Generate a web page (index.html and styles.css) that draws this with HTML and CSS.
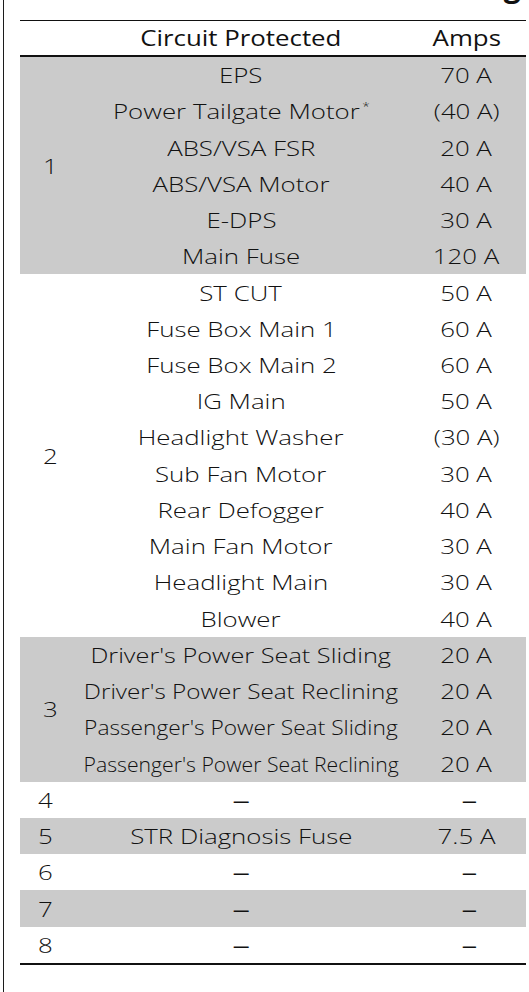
FILE: index.html
```html
<!DOCTYPE html>
<html>
<head>
<meta charset="utf-8">
<link rel="stylesheet" href="styles.css">
</head>
<body>
<div class="page">
  <div class="title-clip"><h2 class="title">Circuit Protected and Fuse Rating</h2></div>
  <table class="fuses">
    <colgroup><col class="c-num"><col class="c-circ"><col class="c-amp"></colgroup>
    <thead>
      <tr><th></th><th><span class="w">Circuit Protected</span></th><th class="amp"><span class="w">Amps</span></th></tr>
    </thead>
    <tbody class="shade">
      <tr><td class="num grp" rowspan="6"><span class="w">1</span></td><td><span class="w">EPS</span></td><td class="amp"><span class="w">70 A</span></td></tr>
      <tr><td><span class="w">Power Tailgate Motor<sup>*</sup></span></td><td class="amp"><span class="w">(40 A)</span></td></tr>
      <tr><td><span class="w">ABS/VSA FSR</span></td><td class="amp"><span class="w">20 A</span></td></tr>
      <tr><td><span class="w">ABS/VSA Motor</span></td><td class="amp"><span class="w">40 A</span></td></tr>
      <tr><td><span class="w">E-DPS</span></td><td class="amp"><span class="w">30 A</span></td></tr>
      <tr><td><span class="w">Main Fuse</span></td><td class="amp"><span class="w">120 A</span></td></tr>
    </tbody>
    <tbody>
      <tr><td class="num grp" rowspan="10"><span class="w">2</span></td><td><span class="w">ST CUT</span></td><td class="amp"><span class="w">50 A</span></td></tr>
      <tr><td><span class="w">Fuse Box Main 1</span></td><td class="amp"><span class="w">60 A</span></td></tr>
      <tr><td><span class="w">Fuse Box Main 2</span></td><td class="amp"><span class="w">60 A</span></td></tr>
      <tr><td><span class="w">IG Main</span></td><td class="amp"><span class="w">50 A</span></td></tr>
      <tr><td><span class="w">Headlight Washer</span></td><td class="amp"><span class="w">(30 A)</span></td></tr>
      <tr><td><span class="w">Sub Fan Motor</span></td><td class="amp"><span class="w">30 A</span></td></tr>
      <tr><td><span class="w">Rear Defogger</span></td><td class="amp"><span class="w">40 A</span></td></tr>
      <tr><td><span class="w">Main Fan Motor</span></td><td class="amp"><span class="w">30 A</span></td></tr>
      <tr><td><span class="w">Headlight Main</span></td><td class="amp"><span class="w">30 A</span></td></tr>
      <tr><td><span class="w">Blower</span></td><td class="amp"><span class="w">40 A</span></td></tr>
    </tbody>
    <tbody class="shade">
      <tr><td class="num grp" rowspan="4"><span class="w">3</span></td><td><span class="w s0">Driver's Power Seat Sliding</span></td><td class="amp"><span class="w">20 A</span></td></tr>
      <tr><td><span class="w s1">Driver's Power Seat Reclining</span></td><td class="amp"><span class="w">20 A</span></td></tr>
      <tr><td><span class="w s2">Passenger's Power Seat Sliding</span></td><td class="amp"><span class="w">20 A</span></td></tr>
      <tr><td><span class="w s3">Passenger's Power Seat Reclining</span></td><td class="amp"><span class="w">20 A</span></td></tr>
    </tbody>
    <tbody>
      <tr><td class="num"><span class="w">4</span></td><td><span class="w dash">–</span></td><td class="amp"><span class="w dash">–</span></td></tr>
    </tbody>
    <tbody class="shade">
      <tr><td class="num"><span class="w">5</span></td><td><span class="w">STR Diagnosis Fuse</span></td><td class="amp"><span class="w">7.5 A</span></td></tr>
    </tbody>
    <tbody>
      <tr><td class="num"><span class="w">6</span></td><td><span class="w dash">–</span></td><td class="amp"><span class="w dash">–</span></td></tr>
    </tbody>
    <tbody class="shade">
      <tr><td class="num"><span class="w">7</span></td><td><span class="w dash">–</span></td><td class="amp"><span class="w dash">–</span></td></tr>
    </tbody>
    <tbody class="last">
      <tr><td class="num"><span class="w">8</span></td><td><span class="w dash">–</span></td><td class="amp"><span class="w dash">–</span></td></tr>
    </tbody>
  </table>
</div>
</body>
</html>
```

FILE: styles.css
```css
html, body {
  margin: 0;
  padding: 0;
  background: #ffffff;
}

body {
  font-family: "Open Sans", "Noto Sans", sans-serif;
  color: #111111;
  overflow: hidden;
}

.page {
  margin-left: 3px;
  border-left: 1px solid #1c1c1c;
  min-height: 992px;
  padding-left: 16px;
}

.title-clip {
  height: 20px;
  overflow: hidden;
}

.title {
  margin: -29px 0 0 1px;
  font-size: 30px;
  line-height: 30px;
  font-weight: 700;
  text-align: left;
  white-space: nowrap;
}

.fuses {
  width: 506px;
  border-collapse: collapse;
  table-layout: fixed;
  font-size: 21px;
  font-weight: 300;
  border-top: 1.5px solid #111;
}

.c-num { width: 57px; }
.c-circ { width: 328px; }
.c-amp { width: 121px; }

.fuses th {
  font-weight: 400;
  height: 34px;
  padding: 0;
  border-bottom: 2px solid #111;
  text-align: center;
  vertical-align: middle;
  white-space: nowrap;
}

.fuses td {
  height: 36.24px;
  padding: 0;
  text-align: center;
  vertical-align: middle;
  line-height: 24px;
  white-space: nowrap;
}

/* the source artwork uses a wide face: widen each label */
.w {
  display: inline-block;
  margin: 0 -60px;
  transform: scaleX(1.23);
  transform-origin: center;
}

.fuses td.num {
  text-align: left;
  padding-left: 18px;
}

.fuses td.num .w {
  margin: 0;
  transform-origin: left center;
}

.fuses td.num.grp {
  padding-left: 23px;
}

.fuses .amp {
  padding-left: 2px;
}

.shade {
  background: #cbcbcb;
}

.last tr td {
  border-bottom: 2px solid #111;
}

sup {
  font-size: 11px;
  line-height: 0;
  vertical-align: 9px;
  margin-left: 2px;
}

.fuses .s0 { transform: scaleX(1.205); }
.fuses .s1 { transform: scaleX(1.156); }
.fuses .s2 { transform: scaleX(1.082); }
.fuses .s3 { transform: scaleX(1.009); }

.fuses .dash {
  font-weight: 500;
  transform: scaleX(1.7);
}

.fuses .amp .dash {
  transform: scaleX(1.5);
  margin-left: -54px;
}
```
